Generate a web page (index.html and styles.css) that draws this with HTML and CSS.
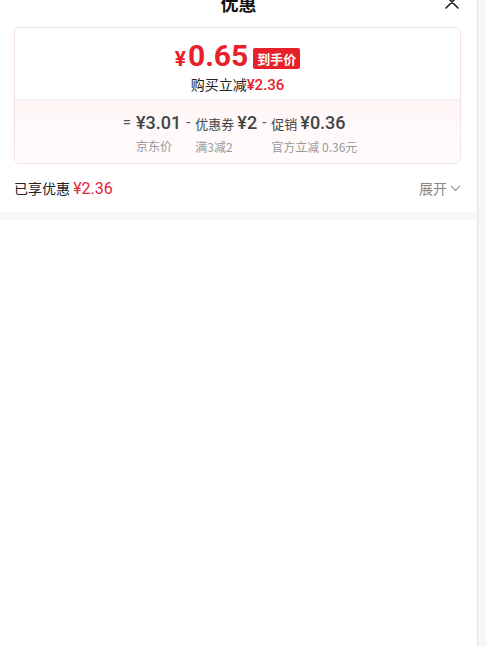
FILE: index.html
```html
<!DOCTYPE html>
<html lang="zh-CN">
<head>
<meta charset="utf-8">
<title>优惠</title>
<link rel="stylesheet" href="styles.css">
</head>
<body>
<div class="frame">
  <main class="content">
    <header class="header">
      <h1 class="title">优惠</h1>
      <button class="close" aria-label="关闭">
        <svg width="16" height="16" viewBox="0 0 16 16"><path d="M2 2 L14 14 M14 2 L2 14" stroke="#222" stroke-width="1.6" fill="none" stroke-linecap="round"/></svg>
      </button>
    </header>

    <section class="card">
      <div class="card-top">
        <div class="price-row">
          <span class="price"><span class="yen">¥</span>0.65</span>
          <span class="badge">到手价</span>
        </div>
        <div class="save">购买立减<span class="red-num">¥2.36</span></div>
      </div>
      <div class="card-bottom">
        <div class="formula">
          <span class="op">=</span>
          <div class="term">
            <div class="val"><span class="num">¥3.01</span></div>
            <div class="lab">京东价</div>
          </div>
          <span class="op">-</span>
          <div class="term">
            <div class="val"><span class="cn">优惠券</span><span class="num">¥2</span></div>
            <div class="lab">满3减2</div>
          </div>
          <span class="op">-</span>
          <div class="term">
            <div class="val"><span class="cn">促销</span><span class="num">¥0.36</span></div>
            <div class="lab">官方立减 0.36元</div>
          </div>
        </div>
      </div>
    </section>

    <div class="summary">
      <div class="enjoyed">已享优惠 <span class="enjoyed-num">¥2.36</span></div>
      <div class="expand">展开
        <svg width="11" height="7" viewBox="0 0 11 7"><path d="M1 1 L5.5 5.5 L10 1" stroke="#999" stroke-width="1.2" fill="none"/></svg>
      </div>
    </div>
    <div class="strip"></div>
  </main>
  <div class="scrollbar"></div>
</div>
</body>
</html>
```

FILE: styles.css
```css
* { box-sizing: border-box; }
html, body { margin: 0; padding: 0; background: #fff; }
body {
  font-family: "Noto Sans CJK SC", "Noto Sans", sans-serif;
  color: #222;
  height: 646px;
  overflow: hidden;
}
.frame {
  display: flex;
  height: 646px;
}
.content {
  width: 477px;
  flex: none;
}
.scrollbar {
  flex: 1;
  background: #f6f6f6;
  border-left: 1px solid #e4e4e4;
}
.header {
  height: 40px;
  margin-top: -17px;
  display: flex;
  align-items: center;
  justify-content: center;
  position: relative;
}
.title {
  margin: 0;
  font-size: 18px;
  font-weight: 700;
  line-height: 24px;
  color: #111;
}
.close {
  position: absolute;
  right: 17px;
  top: 11px;
  width: 16px;
  height: 16px;
  padding: 0;
  border: 0;
  background: none;
  display: flex;
}
.card {
  margin: 4px 16px 0 14px;
  border: 1px solid #f6e1e4;
  border-radius: 6px;
  overflow: hidden;
}
.card-top {
  padding: 12px 0 4px;
  display: flex;
  flex-direction: column;
  align-items: center;
  background: #fff;
}
.price-row {
  height: 34px;
  display: flex;
  align-items: center;
  gap: 5px;
}
.price {
  font-family: Roboto, "Noto Sans", sans-serif;
  font-weight: 700;
  font-size: 30px;
  color: #e8202a;
  line-height: 34px;
}
.yen { font-size: 21px; margin-right: 2px; }
.badge {
  background: #e8202a;
  color: #fff;
  font-size: 13px;
  font-weight: 700;
  height: 21px;
  line-height: 21px;
  padding: 0 4px;
  border-radius: 2px;
  margin-top: 2px;
}
.save {
  font-size: 14px;
  line-height: 20px;
  color: #222;
}
.red-num {
  font-family: Roboto, "Noto Sans", sans-serif;
  color: #e8202a;
  font-weight: 500;
  font-size: 15px;
}
.card-bottom {
  border-top: 1px solid #fbeaeb;
  background: linear-gradient(#fff6f6, #fffcfc);
  padding: 11px 0 7px;
  display: flex;
  justify-content: center;
}
.formula {
  display: flex;
  align-items: flex-start;
}
.op {
  font-family: Roboto, "Noto Sans", sans-serif;
  font-size: 15px;
  line-height: 22px;
  color: #555;
  padding: 0 5px;
}
.term {
  display: flex;
  flex-direction: column;
}
.val {
  line-height: 22px;
  color: #444;
  white-space: nowrap;
}
.cn { font-size: 13px; margin-right: 3px; }
.num {
  font-family: Roboto, "Noto Sans", sans-serif;
  font-size: 18px;
  font-weight: 500;
}
.lab {
  margin-top: 3px;
  font-size: 12px;
  line-height: 18px;
  color: #999;
  white-space: nowrap;
}
.summary {
  margin: 2px 16px 0 14px;
  height: 44px;
  display: flex;
  align-items: center;
  justify-content: space-between;
}
.enjoyed {
  font-size: 14px;
  color: #222;
}
.enjoyed-num {
  font-family: Roboto, "Noto Sans", sans-serif;
  font-size: 16px;
  color: #e2233a;
}
.expand {
  font-size: 14px;
  color: #888;
  display: flex;
  align-items: center;
  gap: 3px;
}
.strip {
  margin-top: 2px;
  height: 8px;
  background: #f7f8fc;
}
```
